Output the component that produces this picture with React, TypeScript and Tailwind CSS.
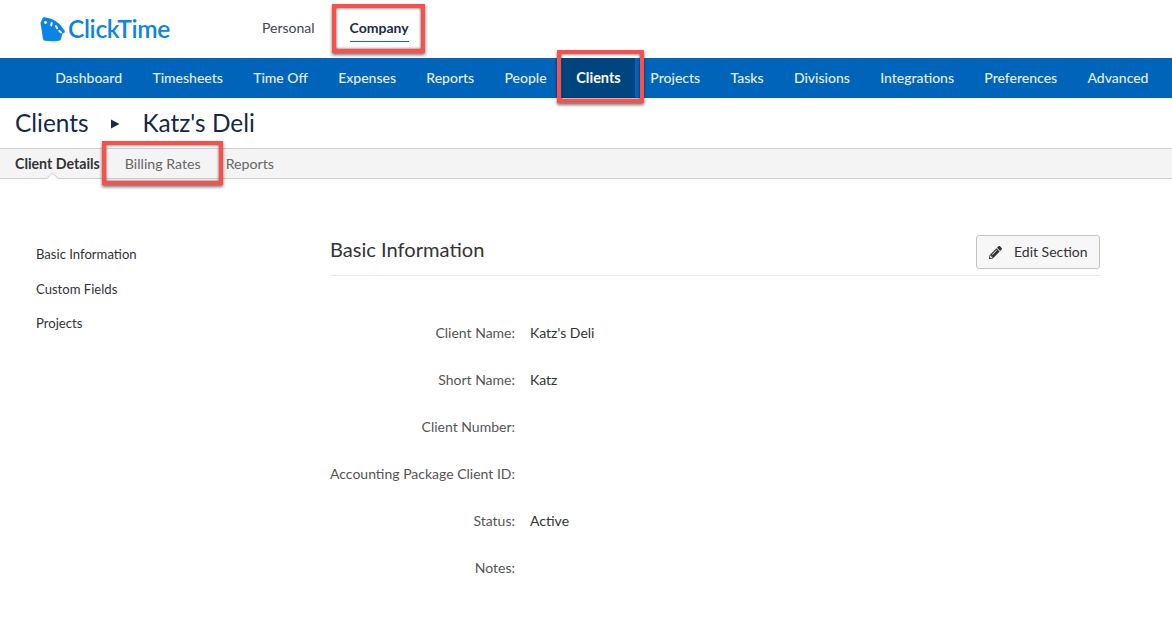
import { FaPencilAlt } from "react-icons/fa";

const NAV_ITEMS = ["Dashboard", "Timesheets", "Time Off", "Expenses", "Reports", "People", "Clients", "Projects", "Tasks", "Divisions", "Integrations", "Preferences", "Advanced"];
const FIELDS = [
  ["Client Name:", "Katz's Deli"],
  ["Short Name:", "Katz"],
  ["Client Number:", ""],
  ["Accounting Package Client ID:", ""],
  ["Status:", "Active"],
  ["Notes:", ""],
];

function RedBox({ className }: { className: string }) {
  return <div className={`pointer-events-none absolute border-4 border-[#f9504c] shadow-[0_2px_3px_rgba(0,0,0,0.55),inset_0_0_3px_rgba(0,0,0,0.7)] ${className}`} />;
}

function Logo() {
  return (
    <svg width="26" height="25" viewBox="0 0 26 25" className="shrink-0">
      <path d="M0.5 6 L2.5 1.2 Q3 0 5 0.3 Q18 2 24.5 13.5 Q25.5 15.5 24 16 L22.5 16.5 L21 22 Q20.5 23.5 19 23.7 Q12 24.8 5 23.8 Q3.5 23.5 3 22 Z" fill="#0a84e6" />
      <circle cx="5.5" cy="5.5" r="1.4" fill="#fff" />
      <rect x="10.5" y="5" width="2" height="4.4" rx="1" fill="#fff" transform="rotate(10 11.5 7)" />
      <rect x="15.5" y="8" width="2" height="4.4" rx="1" fill="#fff" transform="rotate(-30 16.5 10)" />
      <rect x="19" y="12.5" width="2" height="4.4" rx="1" fill="#fff" transform="rotate(-50 20 14.5)" />
    </svg>
  );
}

export default function App() {
  return (
    <div className="relative h-[632px] w-[1172px] overflow-hidden bg-white font-['Lato',sans-serif] text-[#333]">
      <header className="flex h-[58px] items-center">
        <div className="ml-[40px] flex w-[222px] items-center">
          <Logo />
          <span className="ml-[2px] text-[24.5px] font-semibold leading-none tracking-[-0.3px] text-[#0a84e6]">ClickTime</span>
        </div>
        <span className="-mt-0.5 text-sm text-[#3f4650]">Personal</span>
        <div className="ml-[35px] flex flex-col pt-[1px]">
          <span className="text-sm font-bold text-[#1b2c44]">Company</span>
          <div className="mt-[3px] h-px bg-[#0a6fc4]" />
        </div>
      </header>

      <nav className="flex h-10 items-center bg-[#0064bb] pl-[40px]">
        {NAV_ITEMS.map((item) =>
          item === "Clients" ? (
            <span key={item} className="flex h-10 items-center bg-[#004580] px-[14.5px] text-[14.5px] font-bold text-white">{item}</span>
          ) : (
            <span key={item} className="px-[15.15px] text-sm font-medium whitespace-nowrap text-[#e6eff8]">{item}</span>
          ),
        )}
      </nav>

      <div className="flex h-[50px] items-center pl-[15px] text-[24.4px] text-[#14294a]">
        <span>Clients</span>
        <svg width="10" height="10" viewBox="0 0 10 10" className="mt-0.5 ml-[21px] mr-[23px]"><path d="M1 0.5 L9.5 5 L1 9.5 Z" fill="#14294a" /></svg>
        <span>Katz's Deli</span>
      </div>

      <div className="relative flex h-[31px] items-center border-y border-[#cfcfcf] bg-[#f4f4f4] pl-[15px] text-[14.2px]">
        <span className="font-bold text-[#333]">Client Details</span>
        <span className="ml-[25px] text-[#666]">Billing Rates</span>
        <span className="ml-[25px] text-[#666]">Reports</span>
        <div className="absolute bottom-[-5px] left-[48px] h-[9px] w-[9px] rotate-45 border-t border-l border-[#cfcfcf] bg-white" />
      </div>

      <main className="flex">
        <aside className="ml-9 w-[294px] pt-[66px] text-[13.1px] text-[#333]">
          <div className="flex flex-col gap-[15px]">
            <span>Basic Information</span>
            <span>Custom Fields</span>
            <span>Projects</span>
          </div>
        </aside>

        <section className="w-[770px] pt-[56px]">
          <div className="flex h-[41px] items-center justify-between border-b border-[#e8e8e8] pb-1.5">
            <h2 className="mb-[6px] text-[20.1px] text-[#333]">Basic Information</h2>
            <button className="flex h-[34px] w-[124px] items-center rounded-[3px] border border-[#c4c4c4] bg-[#f7f7f7] pl-3 text-sm text-[#333]">
              <FaPencilAlt size={13} />
              <span className="ml-3">Edit Section</span>
            </button>
          </div>
          <dl className="mt-[49px] flex flex-col gap-[31px] text-sm">
            {FIELDS.map(([label, value]) => (
              <div key={label} className="flex h-4 items-center">
                <dt className="w-[185px] text-right whitespace-nowrap text-[#555]">{label}</dt>
                <dd className="ml-[15px] text-[#333]">{value}</dd>
              </div>
            ))}
          </dl>
        </section>
      </main>

      <RedBox className="left-[332px] top-[4px] h-[49px] w-[93px]" />
      <RedBox className="left-[557px] top-[50px] h-[53px] w-[87px]" />
      <RedBox className="left-[102px] top-[141px] h-[44px] w-[121px]" />
    </div>
  );
}
